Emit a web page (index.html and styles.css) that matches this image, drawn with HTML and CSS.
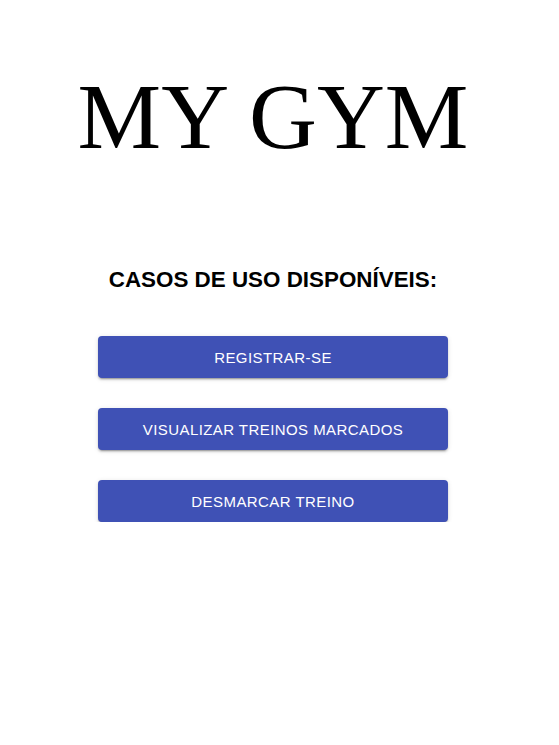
FILE: index.html
```html
<!DOCTYPE html>
<html lang="pt">
<head>
<meta charset="utf-8">
<title>MY GYM</title>
<link rel="stylesheet" href="styles.css">
</head>
<body>
<div class="page">
  <h1 class="title">MY GYM</h1>
  <h2 class="subtitle">CASOS DE USO DISPONÍVEIS:</h2>
  <div class="actions">
    <button class="btn">REGISTRAR-SE</button>
    <button class="btn">VISUALIZAR TREINOS MARCADOS</button>
    <button class="btn">DESMARCAR TREINO</button>
  </div>
</div>
</body>
</html>
```
FILE: styles.css
```css
html, body {
  margin: 0;
  padding: 0;
  background: #fff;
}
.page {
  width: 546px;
  display: flex;
  flex-direction: column;
  align-items: center;
  padding-top: 69px;
}
.title {
  margin: 0;
  font-family: "Liberation Serif", "Times New Roman", serif;
  font-weight: normal;
  font-size: 94px;
  line-height: 94px;
  color: #000;
}
.subtitle {
  margin: 106px 0 0;
  font-family: "Liberation Sans", Arial, sans-serif;
  font-weight: bold;
  font-size: 22.4px;
  line-height: 22px;
  color: #000;
}
.actions {
  margin-top: 45px;
  display: flex;
  flex-direction: column;
  gap: 30px;
}
.btn {
  width: 350px;
  height: 42px;
  border: 0;
  border-radius: 4px;
  background: #3f51b5;
  color: #fff;
  font-family: "Liberation Sans", Arial, sans-serif;
  font-size: 15px;
  letter-spacing: 0.43px;
  padding: 0;
  box-shadow: 0 3px 1px -2px rgba(0,0,0,0.2), 0 2px 2px 0 rgba(0,0,0,0.14), 0 1px 5px 0 rgba(0,0,0,0.12);
  cursor: pointer;
}
```
